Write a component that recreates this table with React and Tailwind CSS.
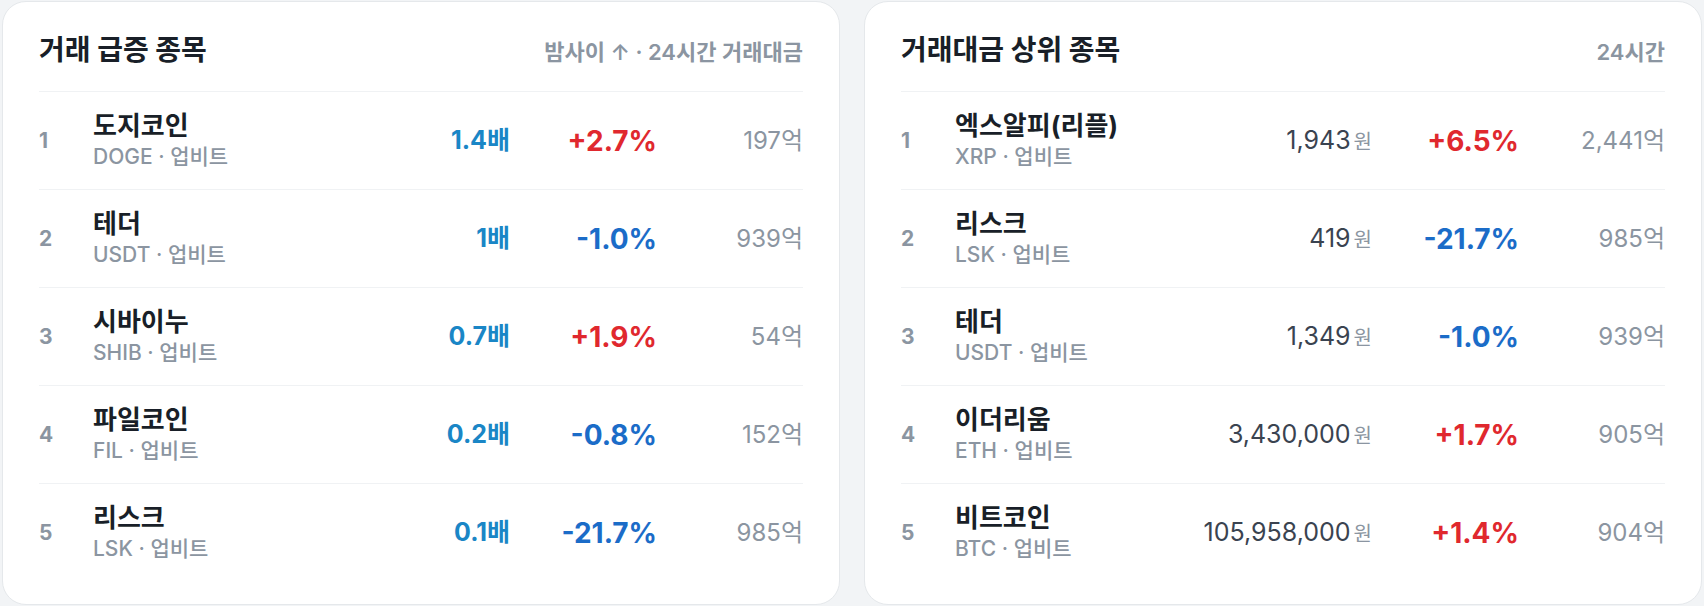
import React from "react";

const font = { fontFamily: '"Inter", "Noto Sans CJK KR", sans-serif' };

const surge = [
  { name: "도지코인", sym: "DOGE", mult: "1.4배", pct: "+2.7%", up: true, amt: "197억" },
  { name: "테더", sym: "USDT", mult: "1배", pct: "-1.0%", up: false, amt: "939억" },
  { name: "시바이누", sym: "SHIB", mult: "0.7배", pct: "+1.9%", up: true, amt: "54억" },
  { name: "파일코인", sym: "FIL", mult: "0.2배", pct: "-0.8%", up: false, amt: "152억" },
  { name: "리스크", sym: "LSK", mult: "0.1배", pct: "-21.7%", up: false, amt: "985억" },
];

const top = [
  { name: "엑스알피(리플)", sym: "XRP", price: "1,943", pct: "+6.5%", up: true, amt: "2,441억" },
  { name: "리스크", sym: "LSK", price: "419", pct: "-21.7%", up: false, amt: "985억" },
  { name: "테더", sym: "USDT", price: "1,349", pct: "-1.0%", up: false, amt: "939억" },
  { name: "이더리움", sym: "ETH", price: "3,430,000", pct: "+1.7%", up: true, amt: "905억" },
  { name: "비트코인", sym: "BTC", price: "105,958,000", pct: "+1.4%", up: true, amt: "904억" },
];

function Row({ rank, item, last, children }) {
  return (
    <div
      className={
        "flex items-center " +
        (last ? "h-[97px]" : "h-[98px] border-b border-[#f0f2f4]")
      }
    >
      <div className="w-[54px] text-[21px] font-bold text-[#8b95a1]">{rank}</div>
      <div className="flex-1 flex flex-col">
        <div className="text-[26px] leading-[32px] font-bold text-[#191f28]">{item.name}</div>
        <div className="text-[21px] leading-[30px] font-medium text-[#8b95a1]">
          {item.sym} · 업비트
        </div>
      </div>
      <div className="text-right whitespace-nowrap">{children}</div>
      <div
        className={
          "w-[147px] text-right text-[28px] font-bold " +
          (item.up ? "text-[#e0282e]" : "text-[#1b6cc8]")
        }
      >
        {item.pct}
      </div>
      <div className="w-[146px] text-right text-[24px] text-[#8b95a1]">{item.amt}</div>
    </div>
  );
}

function Card({ title, sub, children }) {
  return (
    <div className="bg-white border border-[#e5e8eb] rounded-[24px] px-9 pb-[23px]">
      <div className="flex items-baseline justify-between pt-[30px] pb-[22px] border-b border-[#f0f2f4]">
        <div className="text-[28px] leading-[36px] font-bold text-[#191f28]">{title}</div>
        <div className="text-[22px] font-semibold text-[#8b95a1]">{sub}</div>
      </div>
      {children}
    </div>
  );
}

export default function App() {
  return (
    <div style={font} className="w-[1704px] h-[606px] bg-[#f2f4f6] px-[2px] pt-[1px]">
      <div className="grid grid-cols-2 gap-[24px]">
        <Card title="거래 급증 종목" sub="밤사이 ↑ · 24시간 거래대금">
          {surge.map((it, i) => (
            <Row key={i} rank={i + 1} item={it} last={i === surge.length - 1}>
              <span className="text-[25px] font-bold text-[#1a86c6]">{it.mult}</span>
            </Row>
          ))}
        </Card>
        <Card title="거래대금 상위 종목" sub="24시간">
          {top.map((it, i) => (
            <Row key={i} rank={i + 1} item={it} last={i === top.length - 1}>
              <span className="text-[25px] text-[#3a4350]">{it.price}</span>
              <span className="text-[20px] text-[#8b95a1] ml-[3px]">원</span>
            </Row>
          ))}
        </Card>
      </div>
    </div>
  );
}
